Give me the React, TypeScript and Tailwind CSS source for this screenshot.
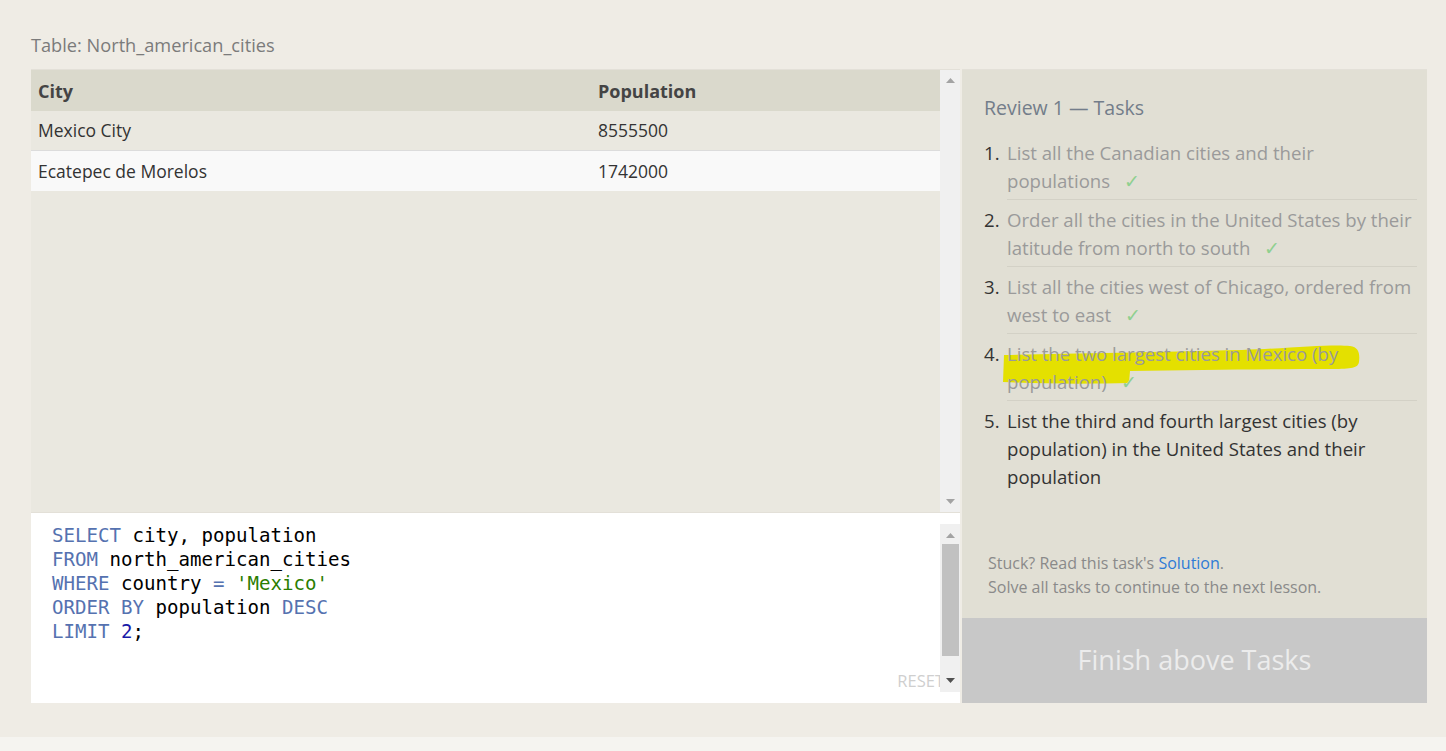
const sans = "font-['Open_Sans',sans-serif]";

const tasks = [
  { text: 'List all the Canadian cities and their populations', done: true },
  { text: 'Order all the cities in the United States by their latitude from north to south', done: true },
  { text: 'List all the cities west of Chicago, ordered from west to east', done: true },
  { text: 'List the two largest cities in Mexico (by population)', done: true, marked: true },
  { text: 'List the third and fourth largest cities (by population) in the United States and their population', done: false },
];

const rows = [
  { city: 'Mexico City', population: '8555500' },
  { city: 'Ecatepec de Morelos', population: '1742000' },
];

function Arrow({ up, dark }: { up?: boolean; dark?: boolean }) {
  return (
    <svg width="9" height="5" viewBox="0 0 9 5" className="block">
      <path d={up ? 'M0 5 L4.5 0 L9 5 Z' : 'M0 0 L9 0 L4.5 5 Z'} fill={dark ? '#505050' : '#a3a3a3'} />
    </svg>
  );
}

export default function App() {
  return (
    <div className={`w-[1446px] h-[751px] bg-[#f5f4f0] ${sans}`}>
      <div className="h-[737px] bg-[#efece5] pl-[31px] pt-[33px]">
        <div className="text-[18.2px] leading-[24px] text-[#7b7b7b]">Table: North_american_cities</div>

        <div className="mt-[12px] flex h-[634px]">
          {/* left: results + editor */}
          <div className="w-[929px] flex flex-col">
            <div className="h-[443px] flex bg-[#eae8e0] border-t border-[#e3e0d8]">
              <div className="flex-1">
                <div className="flex h-[41px] pt-[1px] items-center bg-[#dad9cc] text-[#444] font-bold text-[18px]">
                  <div className="w-[560px] pl-[7px]">City</div>
                  <div className="pl-[7px]">Population</div>
                </div>
                {rows.map((r, i) => (
                  <div
                    key={r.city}
                    className={`flex h-[40px] items-center text-[17.5px] text-[#333] ${i === 0 ? 'border-b border-[#dcdcdc] bg-[#eae8e0]' : 'bg-[#f9f9f9]'}`}
                  >
                    <div className="w-[560px] pl-[7px]">{r.city}</div>
                    <div className="pl-[7px]">{r.population}</div>
                  </div>
                ))}
              </div>
              <div className="w-[20px] bg-[#f0f0f0] flex flex-col items-center justify-between pt-[8px] pb-[8px]">
                <Arrow up />
                <Arrow />
              </div>
            </div>

            <div className="relative h-[191px] bg-white border-t border-[#e3e0d8] flex">
              <pre className="flex-1 pl-[21px] pt-[11px] font-['DejaVu_Sans_Mono',monospace] text-[19.1px] leading-[24px] text-black">
                <span className="text-[#5572b0]">SELECT</span> city, population{'\n'}
                <span className="text-[#5572b0]">FROM</span> north_american_cities{'\n'}
                <span className="text-[#5572b0]">WHERE</span> country <span className="text-[#5572b0]">=</span> <span className="text-[#2a7d00]">'Mexico'</span>{'\n'}
                <span className="text-[#5572b0]">ORDER BY</span> population <span className="text-[#5572b0]">DESC</span>{'\n'}
                <span className="text-[#5572b0]">LIMIT</span> <span className="text-[#1a1aa8]">2</span>;
              </pre>
              <span className="absolute right-[16px] bottom-[12px] text-[16.5px] leading-[20px] text-[#cfcfcf]">RESET</span>
              <div className="relative z-10 w-[20px] my-[11px] bg-[#f0f0f0] flex flex-col items-center pt-[9px] pb-[9px]">
                <Arrow up />
                <div className="mt-[6px] w-[17px] h-[112px] bg-[#c1c1c1]" />
                <div className="flex-1" />
                <Arrow dark />
              </div>
            </div>
          </div>

          {/* right: tasks */}
          <div className="ml-[2px] w-[465px] flex flex-col bg-[#e1dfd4] border-t border-[#e3e0d8]">
            <div className="pl-[22px] pr-[10px] pt-[24px]">
              <div className="text-[19.5px] leading-[28px] text-[#737d8a]">Review 1 — Tasks</div>
              <ol className="mt-[11px]">
                {tasks.map((t, i) => (
                  <li key={i} className="relative flex text-[18.6px] leading-[28px]">
                    {t.marked && (
                      <svg
                        className="absolute left-[18px] top-[9px] pointer-events-none"
                        width="365"
                        height="50"
                        viewBox="0 0 365 50"
                      >
                        <path
                          d="M2 12 C60 11 150 9 240 7 C290 5 330 1 348 3 C357 4 358 11 357 19 C356 25 350 26 330 26 C270 26 200 27 128 28 L127 40 C90 41 40 41 1 39 Z"
                          fill="#e4e000"
                        />
                      </svg>
                    )}
                    <span className="relative w-[23px] pt-[6px] text-[#333]">{i + 1}.</span>
                    <div
                      className={`relative flex-1 pt-[6px] pb-[4px] ${i < tasks.length - 1 ? 'border-b border-[#d3d1c6]' : ''} ${t.done ? 'text-[#9a9a9a]' : 'text-[#333]'}`}
                    >
                      {t.text}
                      {t.done && <span className="ml-[14px] text-[#8fd08f]">✓</span>}
                    </div>
                  </li>
                ))}
              </ol>
            </div>
            <div className="mt-auto pl-[26px] pb-[19px] text-[16px] leading-[24px] text-[#8a8a8a]">
              <div>
                Stuck? Read this task's <span className="text-[#2e7bd6]">Solution</span>.
              </div>
              <div>Solve all tasks to continue to the next lesson.</div>
            </div>
            <div className="h-[85px] bg-[#c8c8c8] flex items-center justify-center text-[27px] text-[#ececec]">
              Finish above Tasks
            </div>
          </div>
        </div>
      </div>
    </div>
  );
}
